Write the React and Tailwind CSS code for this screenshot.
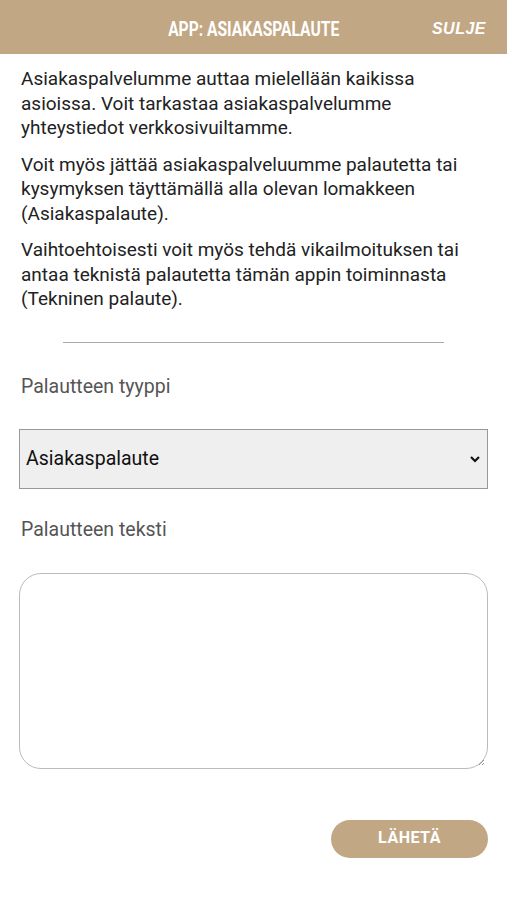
import React from "react";

export default function App() {
  return (
    <div className="w-[507px] min-h-[900px] bg-white" style={{ fontFamily: "Roboto, 'Noto Sans', sans-serif" }}>
      <header className="relative h-[54px] bg-[#c2a784] flex items-center justify-center">
        <span
          className="inline-block text-white font-bold text-[20px] pt-[3px] scale-x-[0.78] origin-center"
          style={{ fontFamily: "Roboto, sans-serif" }}
        >
          APP: ASIAKASPALAUTE
        </span>
        <span
          className="absolute right-[21px] top-[17px] text-white font-bold italic text-[16px] tracking-[0.5px]"
          style={{ fontFamily: "'Liberation Sans', Arial, sans-serif" }}
        >
          SULJE
        </span>
      </header>
      <main className="px-[21px] pt-[13px] text-[19px] leading-[24.5px] text-[#222]">
        <p>Asiakaspalvelumme auttaa mielellään kaikissa asioissa. Voit tarkastaa asiakaspalvelumme yhteystiedot verkkosivuiltamme.</p>
        <p className="mt-[12px]">Voit myös jättää asiakaspalveluumme palautetta tai kysymyksen täyttämällä alla olevan lomakkeen (Asiakaspalaute).</p>
        <p className="mt-[12px]">Vaihtoehtoisesti voit myös tehdä vikailmoituksen tai antaa teknistä palautetta tämän appin toiminnasta (Tekninen palaute).</p>
        <div className="mx-[42px] mt-[30px] h-px bg-[#aaa]" />
        <div className="mt-[32px] text-[#555] text-[19.5px]">Palautteen tyyppi</div>
        <div className="relative mt-[30px] -mx-[2px] h-[60px] bg-[#efefef] border border-[#999] flex items-center px-[6px] text-[#111] text-[19.5px]">
          <span>Asiakaspalaute</span>
          <svg className="absolute right-[6px] top-[24px]" width="12" height="10" viewBox="0 0 12 10">
            <path d="M2 3 L6 7 L10 3" fill="none" stroke="#111" strokeWidth="2.2" />
          </svg>
        </div>
        <div className="mt-[29px] text-[#555] text-[19.5px]">Palautteen teksti</div>
        <div className="relative mt-[30px] -mx-[2px] h-[196px] border border-[#bbb] rounded-[22px]">
          <svg className="absolute right-[2px] bottom-[2px]" width="8" height="8" viewBox="0 0 8 8">
            <path d="M7 2 L2 7 M7 5 L5 7" stroke="#999" strokeWidth="1" />
          </svg>
        </div>
        <div className="flex justify-end mt-[51px] -mr-[2px]">
          <button className="w-[157px] h-[38px] rounded-full bg-[#c2a784] text-white font-bold text-[16px] tracking-[0.5px]">
            LÄHETÄ
          </button>
        </div>
      </main>
    </div>
  );
}
